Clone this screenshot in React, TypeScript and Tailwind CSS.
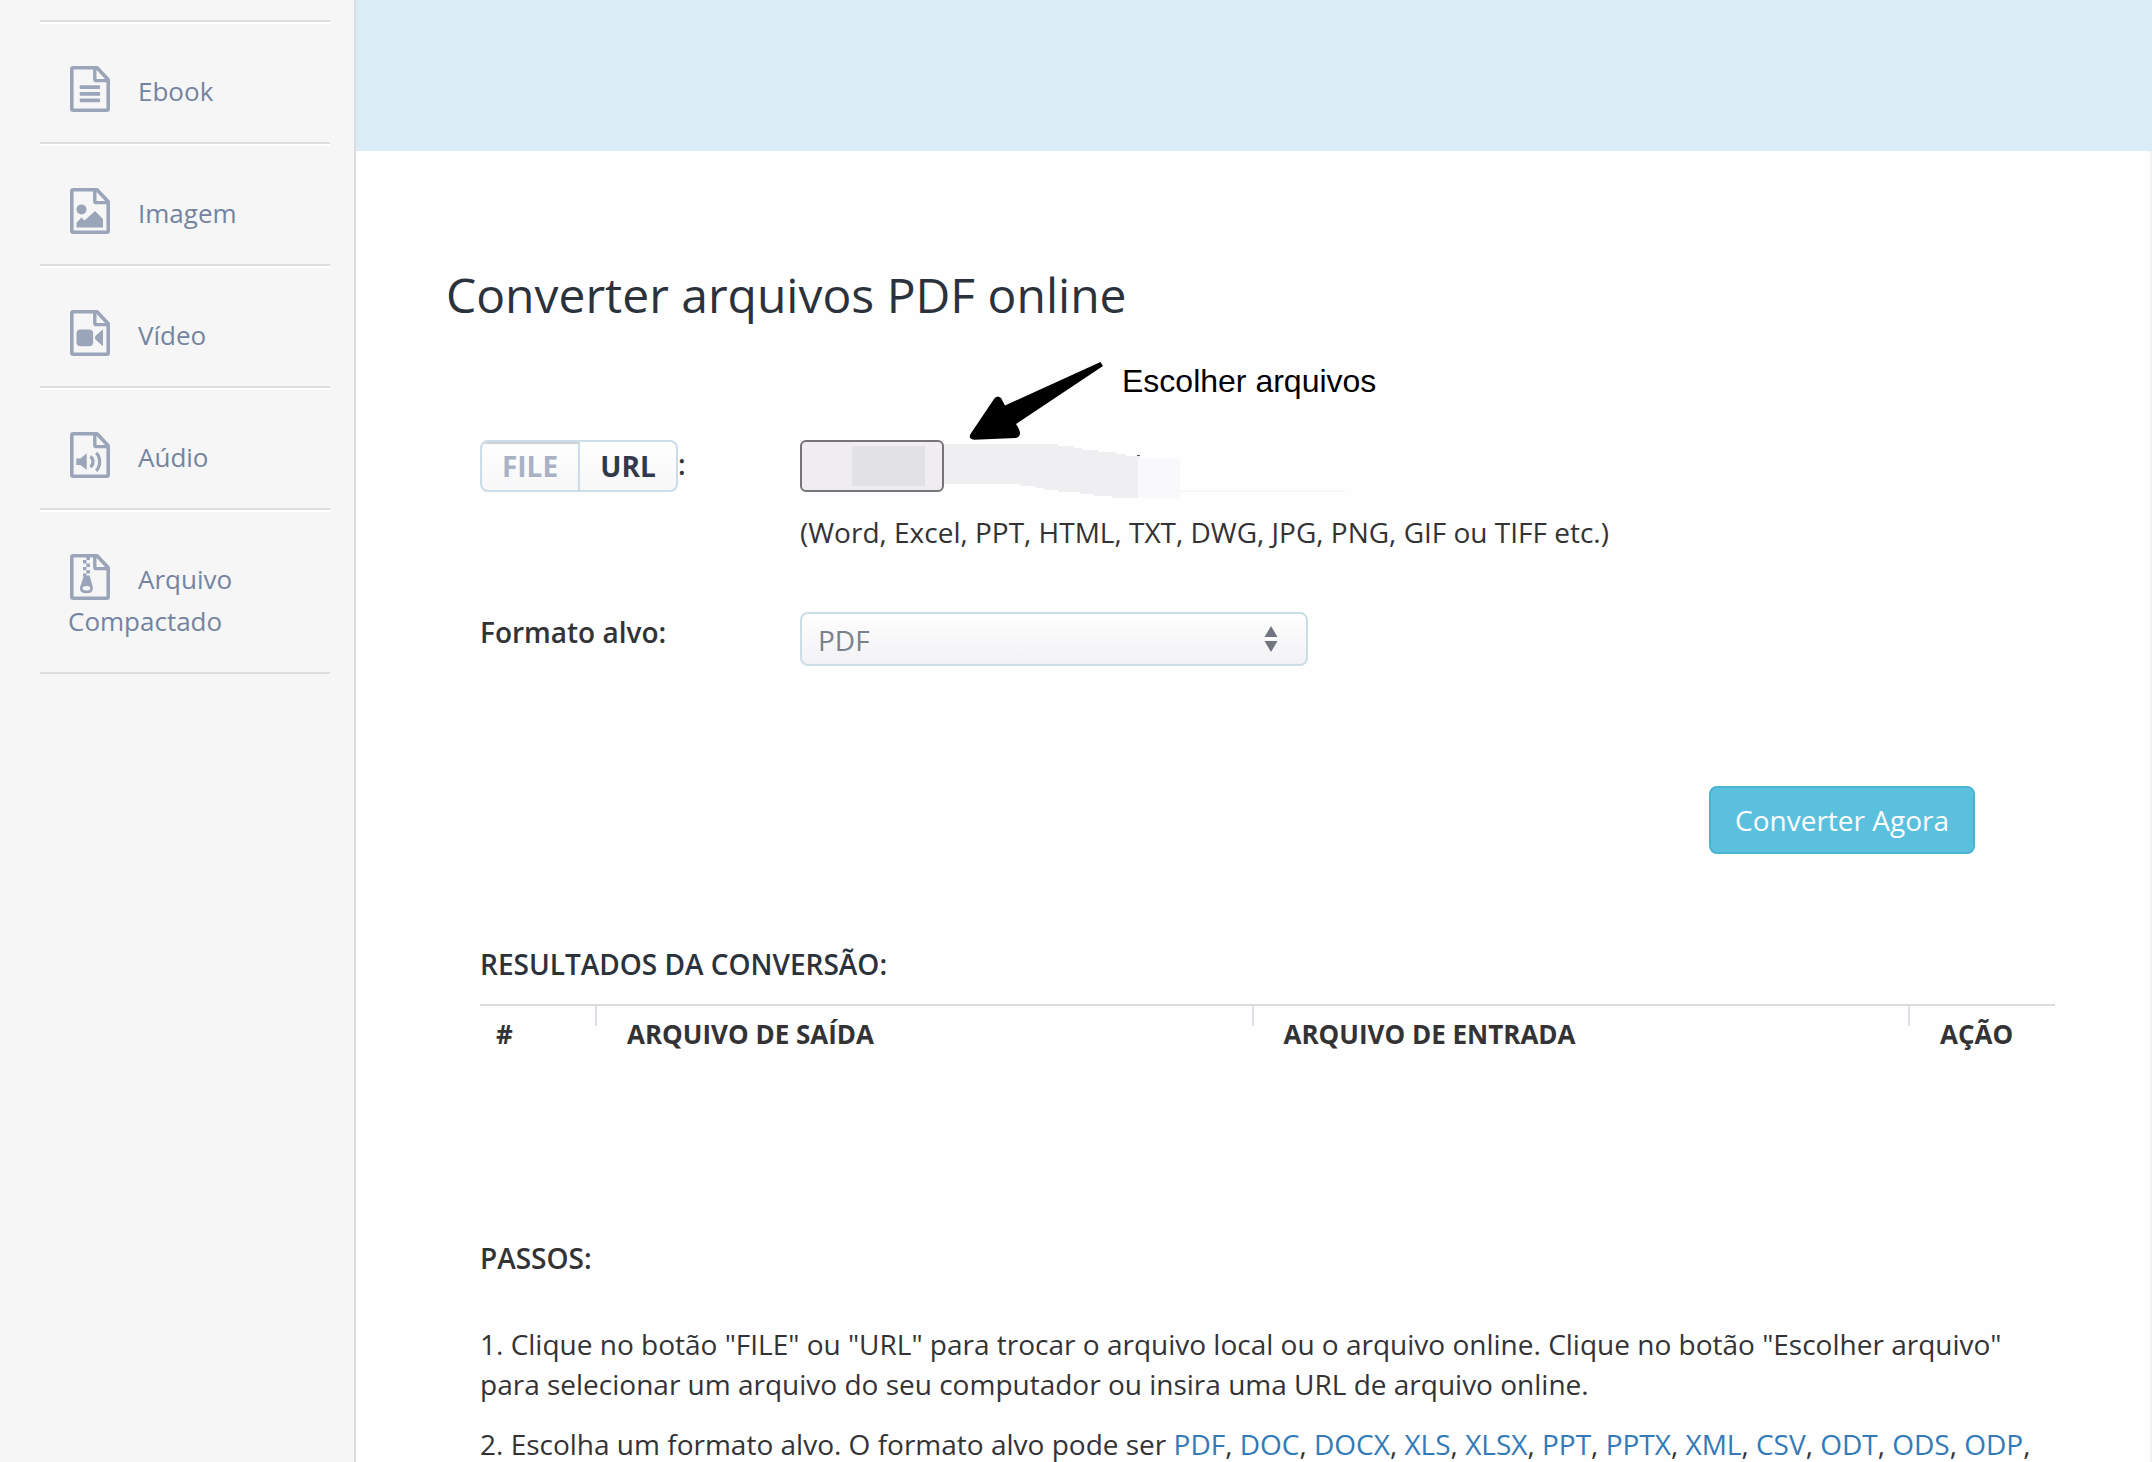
import React, { useState } from "react";

function FileIcon({ children }: { children: React.ReactNode }) {
  return (
    <svg
      viewBox="-2 0 44 46"
      aria-hidden="true"
      className="mr-[26px] inline-block h-[46px] w-11 align-[-11px] text-[#9aa5b9]"
      fill="currentColor"
    >
      <path
        d="M3.2 1.8H27L38.2 13.8V42.8Q38.2 44.2 36.8 44.2H3.2Q1.8 44.2 1.8 42.8V3.2Q1.8 1.8 3.2 1.8Z"
        fill="none"
        stroke="currentColor"
        strokeWidth="3.6"
        strokeLinejoin="round"
      />
      <path d="M24.8 2V13.2Q24.8 14.6 26.2 14.6H38" fill="none" stroke="currentColor" strokeWidth="3.4" />
      {children}
    </svg>
  );
}

const items = [
  {
    label: "Ebook",
    glyph: (
      <>
        <rect x="9.7" y="19.2" width="20.4" height="3.8" rx="1" />
        <rect x="9.7" y="25.9" width="20.4" height="3.8" rx="1" />
        <rect x="9.7" y="32.4" width="20.4" height="3.8" rx="1" />
      </>
    ),
  },
  {
    label: "Imagem",
    glyph: (
      <>
        <circle cx="11.5" cy="21.4" r="5" />
        <path d="M6.5 39.5V34.5L11.5 29.5L14.5 32.5L25 23L33 31V39.5Z" />
      </>
    ),
  },
  {
    label: "Vídeo",
    glyph: (
      <>
        <rect x="6.5" y="19.4" width="16.6" height="16.8" rx="4" />
        <path d="M25 27.8Q25 26.6 26 25.6L32 20Q33 19.2 33 20.6V35Q33 36.4 32 35.6L26 30Q25 29 25 27.8Z" />
      </>
    ),
  },
  {
    label: "Aúdio",
    glyph: (
      <>
        <path d="M6.3 26.4H10.4L16.7 21.3V38.1L10.4 33H6.3Z" />
        <path
          d="M20.2 24.6Q23 26 23 29.7T20.2 34.9M26.2 20.8Q29.6 24 29.6 29.7T26.2 38.8"
          fill="none"
          stroke="currentColor"
          strokeWidth="3.2"
        />
      </>
    ),
  },
  {
    label: "Arquivo Compactado",
    glyph: (
      <>
        <path d="M16.4 3H19.9V6H16.4ZM13 6H16.4V9.4H13ZM16.4 9.4H19.9V13H16.4ZM13 13H16.4V16.2H13ZM16.4 16.2H19.9V19.4H16.4ZM13 19.4H16.4V22.4H13Z" />
        <path
          fillRule="evenodd"
          d="M14 21.6H19.6L22.9 33.2Q23.6 39.2 16.4 39.2T10 33.2ZM16.4 32Q12.6 32.2 12.6 34.2T16.4 36.4T20.2 34.2T16.4 32Z"
        />
      </>
    ),
  },
];

const formats = ["PDF", "DOC", "DOCX", "XLS", "XLSX", "PPT", "PPTX", "XML", "CSV", "ODT", "ODS", "ODP"];

export default function App() {
  const [mode, setMode] = useState("FILE");

  return (
    <div className="flex h-screen overflow-hidden bg-[#fefefe] font-['Open_Sans',sans-serif] text-[28px] leading-10 text-[#333336]">
      <aside className="w-[356px] shrink-0 border-r-2 border-[#dbdee0] bg-[#f6f6f7]">
        <nav className="ml-10 mr-6 pt-5">
          <ul className="border-t-2 border-[#dcdfe2] text-[26px] leading-[42px]">
            {items.map((item) => (
              <li key={item.label} className="border-b-2 border-[#dcdfe2] shadow-[inset_0_2px_0_#fff]">
                <a href="#" className="block pb-[30px] pl-7 pt-11 text-[#7484a0]">
                  <FileIcon>{item.glyph}</FileIcon>
                  {item.label}
                </a>
              </li>
            ))}
          </ul>
        </nav>
      </aside>

      <main className="flex min-w-0 flex-1 flex-col">
        <div className="h-[151px] shrink-0 bg-[#daecf5]" />
        <div className="flex-1 border-r-2 border-[#f1f1f3] pl-[90px] pr-[95px] pt-[118px]">
          <h1 className="text-[48px] leading-[52px] text-[#2c323c]">Converter arquivos PDF online</h1>

          <div className="pl-[34px]">
            <form className="pt-[119px]" onSubmit={(e) => e.preventDefault()}>
              <div className="flex">
                <div className="flex w-80 items-start">
                  <div className="flex h-[52px] overflow-hidden rounded-lg border-2 border-[#cddde8] bg-linear-to-b from-white to-[#f7f7f9] font-bold">
                    <button
                      type="button"
                      aria-pressed={mode === "FILE"}
                      onClick={() => setMode("FILE")}
                      className={`w-[98px] border-r-2 border-[#cddde8] ${mode === "FILE" ? "text-[#a9b1c4] shadow-[inset_0_2px_1px_#ccd0d2]" : "text-[#323a49]"}`}
                    >
                      FILE
                    </button>
                    <button
                      type="button"
                      aria-pressed={mode === "URL"}
                      onClick={() => setMode("URL")}
                      className={`w-24 ${mode === "URL" ? "text-[#a9b1c4] shadow-[inset_0_2px_1px_#ccd0d2]" : "text-[#323a49]"}`}
                    >
                      URL
                    </button>
                  </div>
                  <span className="pt-1 font-semibold">:</span>
                </div>

                <div className="relative flex-1">
                  <div className="flex h-[52px]">
                    <button
                      type="button"
                      aria-label="Escolher arquivos"
                      className="w-36 rounded-md border-2 border-[#767479] bg-[#efedf0] py-1 pl-[50px] pr-[17px]"
                    >
                      <span className="block h-full bg-[#e2e1e4]" />
                    </button>
                    <svg aria-hidden="true" viewBox="0 0 404 60" className="h-[60px] w-[404px]">
                      <path d="M0 4H114V6H130V8H138V10H154V12H172V14H182V16H196V58H168V56H150V54H136V52H114V50H100V48H92V46H76V44H0Z" fill="#efeef0" />
                      <rect x="194" y="18" width="42" height="40" fill="#f9f8fb" />
                      <rect x="193" y="15" width="3" height="1" fill="#555" />
                      <rect x="236" y="50" width="165" height="2" fill="#f8f8f9" />
                    </svg>
                  </div>
                  <svg
                    aria-hidden="true"
                    viewBox="960 355 150 90"
                    className="absolute -top-[85px] left-40 h-[90px] w-[150px]"
                  >
                    <path
                      d="M1100.500 362L1103 366L1016 424Q1020 430 1020 433Q1020 437 1016 438L974 439.700Q968 439 970.500 434L994 399Q997 394.500 1001 398L1005 405.500Z"
                      fill="#000"
                    />
                  </svg>
                  <span className="absolute -top-[79px] left-[322px] whitespace-nowrap font-['Liberation_Sans',sans-serif] text-[32px] text-black">
                    Escolher arquivos
                  </span>
                  <p className="mt-5">(Word, Excel, PPT, HTML, TXT, DWG, JPG, PNG, GIF ou TIFF etc.)</p>
                </div>
              </div>

              <div className="mt-[60px] flex items-start">
                <label htmlFor="format" className="w-80 font-semibold">
                  Formato alvo:
                </label>
                <div className="relative">
                  <select
                    id="format"
                    className="h-[54px] w-[508px] appearance-none rounded-lg border-2 border-[#cddde6] bg-linear-to-b from-[#fefefe] to-[#f2f2f5] pl-4 pt-0.5 text-[#7a818c]"
                  >
                    {formats.map((f) => (
                      <option key={f}>{f}</option>
                    ))}
                  </select>
                  <svg
                    aria-hidden="true"
                    viewBox="0 0 14 26"
                    className="pointer-events-none absolute right-[30px] top-3.5 h-[26px] w-3.5"
                    fill="#717582"
                  >
                    <path d="M7 0L13.500 11H.5ZM7 26L13.500 15H.5Z" />
                    <path d="M1 12H13V14H1Z" fill="#fff" />
                  </svg>
                </div>
              </div>

              <div className="mt-[120px] flex justify-end pr-20">
                <button
                  type="submit"
                  className="h-[68px] rounded-lg border-2 border-[#4ab3d2] bg-[#5bc0de] px-6 text-white"
                >
                  Converter Agora
                </button>
              </div>
            </form>

            <h2 className="mt-[90px] font-semibold text-[#2c323c]">RESULTADOS DA CONVERSÃO:</h2>
            <table className="mt-5 w-full table-fixed border-t-2 border-[#dcdce0] text-left text-[26px] leading-[38px]">
              <colgroup>
                <col className="w-[115px]" />
                <col />
                <col />
                <col className="w-[147px]" />
              </colgroup>
              <thead>
                <tr>
                  <th className="p-0 align-top font-bold">
                    <div className="pl-4 pt-[9px]">#</div>
                  </th>
                  {["ARQUIVO DE SAÍDA", "ARQUIVO DE ENTRADA", "AÇÃO"].map((h) => (
                    <th key={h} className="p-0 align-top font-bold">
                      <div className="flex items-start">
                        <span className="h-5 w-0.5 bg-[#dfdfe5]" />
                        <span className="pl-[30px] pt-[9px]">{h}</span>
                      </div>
                    </th>
                  ))}
                </tr>
              </thead>
            </table>

            <h2 className="mt-[185px] font-semibold">PASSOS:</h2>
            <p className="mt-[46px]">
              1. Clique no botão "FILE" ou "URL" para trocar o arquivo local ou o arquivo online. Clique no botão
              "Escolher arquivo" para selecionar um arquivo do seu computador ou insira uma URL de arquivo online.
            </p>
            <p className="mt-5">
              2. Escolha um formato alvo. O formato alvo pode ser{" "}
              {formats.map((f) => (
                <React.Fragment key={f}>
                  <a href="#" className="text-[#337ab7]">
                    {f}
                  </a>
                  ,{" "}
                </React.Fragment>
              ))}
            </p>
          </div>
        </div>
      </main>
    </div>
  );
}
